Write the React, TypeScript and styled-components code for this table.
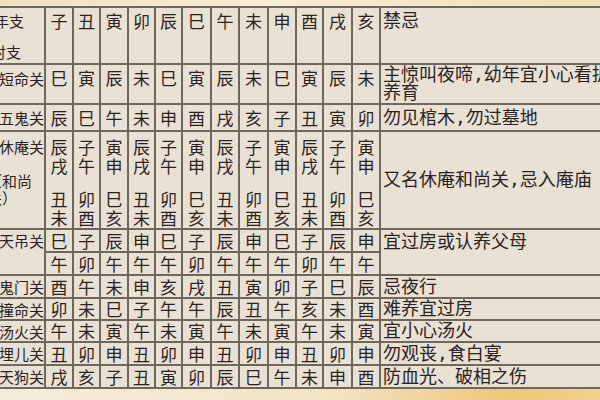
import type { FC } from 'react';
import styled, { createGlobalStyle } from 'styled-components';

const GlobalStyle = createGlobalStyle`
  html, body {
    margin: 0;
    padding: 0;
    background: #e9e1d3;
  }
`;

const BRANCHES = ['子', '丑', '寅', '卯', '辰', '巳', '午', '未', '申', '酉', '戌', '亥'];

// 休庵关: each cell holds two stacked pairs
const MONK_PAIRS = [
  ['辰戌', '丑未'],
  ['子午', '卯酉'],
  ['寅申', '巳亥'],
];

type Row = { name: string; cells: string; note: string };

const ROWS_AFTER: Row[] = [
  { name: '鬼门关', cells: '酉午未申亥戌丑寅卯子巳辰', note: '忌夜行' },
  { name: '撞命关', cells: '卯未巳子午午辰丑午亥未酉', note: '难养宜过房' },
  { name: '汤火关', cells: '午未寅午未寅午未寅午未寅', note: '宜小心汤火' },
  { name: '埋儿关', cells: '丑卯申丑卯申丑卯申丑卯申', note: '勿观丧,食白宴' },
  { name: '天狗关', cells: '戌亥子丑寅卯辰巳午未申酉', note: '防血光、破相之伤' },
];

const Page = styled.div`
  width: 600px;
  height: 400px;
  overflow: hidden;
  display: flex;
  flex-direction: column;
  background: #e9e1d3;
  color: #2a231f;
  font-family: "Noto Sans CJK SC", sans-serif;
`;

const TopBand = styled.div`
  height: 6px;
  flex-shrink: 0;
  background: linear-gradient(90deg, #efe2bf 0%, #f6edd3 45%, #f0e0b4 100%);
`;

const BottomBand = styled.div`
  flex: 1;
  background: linear-gradient(90deg, #f4ecdc 0%, #f3e4c4 55%, #efc678 85%, #f3d18e 100%);
`;

const Table = styled.div`
  display: grid;
  grid-template-columns: 56px 26px 25px 26px 25px 25px 27px 26px 27px 26px 25px 27px 26px 240px;
  grid-template-rows: 55px 38px 25px 96px 21px 21px 21px 20px 20px 21px 21px;
  gap: 2px;
  padding: 2px 0;
  margin-left: -12px;
  align-self: flex-start;
  flex-shrink: 0;
  background: #6e675c;
`;

const Cell = styled.div`
  background: #e9e1d3;
  display: flex;
  min-width: 0;
  white-space: nowrap;
`;

const HeadLabel = styled(Cell)`
  flex-direction: column;
  justify-content: space-between;
  padding: 3px 0 1px 3px;
  font-size: 15px;
  line-height: 20px;
`;

const HeadLine = styled.span<{ $shift?: number }>`
  margin-left: ${(p) => p.$shift ?? 0}px;
`;

const Label = styled(Cell)<{ $span?: number; $top?: boolean; $lift?: number }>`
  grid-row: span ${(p) => p.$span ?? 1};
  justify-content: flex-end;
  align-items: ${(p) => (p.$top ? 'flex-start' : 'center')};
  padding-bottom: ${(p) => p.$lift ?? 0}px;
  font-size: 15px;
  line-height: 21px;
`;

const MonkLabel = styled(Cell)`
  flex-direction: column;
  padding-top: 5px;
  font-size: 15px;
  line-height: 17px;
`;

const MonkLine = styled.div<{ $first?: boolean }>`
  align-self: ${(p) => (p.$first ? 'flex-end' : 'flex-start')};
  line-height: ${(p) => (p.$first ? '19px' : '17px')};
  margin-bottom: ${(p) => (p.$first ? '16px' : '0')};
  margin-left: ${(p) => (p.$first ? '0' : '-1px')};
`;

const Branch = styled(Cell)<{ $head?: boolean; $lift?: number }>`
  justify-content: center;
  align-items: ${(p) => (p.$head ? 'flex-start' : 'center')};
  padding-top: ${(p) => (p.$head ? '3px' : '0')};
  padding-bottom: ${(p) => p.$lift ?? 0}px;
  font-size: 17px;
  line-height: 20px;
`;

const Stack = styled(Cell)`
  flex-direction: column;
  justify-content: space-between;
  align-items: center;
  padding: 5px 0 1px;
  font-size: 17px;
  line-height: 19px;
`;

const Pair = styled.div`
  display: flex;
  flex-direction: column;
  align-items: center;
`;

const Note = styled(Cell)<{ $span?: number; $top?: boolean; $pad?: number }>`
  grid-row: span ${(p) => p.$span ?? 1};
  flex-direction: column;
  justify-content: ${(p) => (p.$top ? 'flex-start' : 'center')};
  padding: ${(p) => p.$pad ?? 0}px 0 0 2px;
  font-family: "DejaVu Sans Mono", "Noto Sans CJK SC", monospace;
  font-size: 18px;
  line-height: ${(p) => (p.$top ? '18px' : '20px')};
`;

const BranchRow: FC<{ cells: string; lift?: number }> = ({ cells, lift }) => (
  <>
    {Array.from(cells).map((c, i) => (
      <Branch key={i} $lift={lift}>
        {c}
      </Branch>
    ))}
  </>
);

const RowBlock: FC<{ row: Row }> = ({ row }) => (
  <>
    <Label>{row.name}</Label>
    <BranchRow cells={row.cells} />
    <Note>{row.note}</Note>
  </>
);

const App: FC = () => {
  return (
    <>
      <GlobalStyle />
      <Page>
        <TopBand />
        <Table>
          {/* header */}
          <HeadLabel>
            <HeadLine $shift={3}>年支</HeadLine>
            <HeadLine>时支</HeadLine>
          </HeadLabel>
          {BRANCHES.map((b) => (
            <Branch key={b} $head>
              {b}
            </Branch>
          ))}
          <Note $top $pad={4}>
            禁忌
          </Note>

          <Label $lift={12}>短命关</Label>
          <BranchRow cells="巳寅辰未巳寅辰未巳寅辰未" lift={12} />
          <Note $top $pad={1}>
            <span>主惊叫夜啼,幼年宜小心看护</span>
            <span>养育</span>
          </Note>

          <Label>五鬼关</Label>
          <BranchRow cells="辰巳午未申酉戌亥子丑寅卯" />
          <Note>勿见棺木,勿过墓地</Note>

          <MonkLabel>
            <MonkLine $first>休庵关</MonkLine>
            <MonkLine>（和尚</MonkLine>
            <MonkLine>关）</MonkLine>
          </MonkLabel>
          {BRANCHES.map((b, i) => (
            <Stack key={b}>
              {MONK_PAIRS[i % 3].map((pair) => (
                <Pair key={pair}>
                  {Array.from(pair).map((c) => (
                    <span key={c}>{c}</span>
                  ))}
                </Pair>
              ))}
            </Stack>
          ))}
          <Note>又名休庵和尚关,忌入庵庙</Note>

          <Label $span={2} $top>
            天吊关
          </Label>
          <BranchRow cells="巳子辰申巳子辰申巳子辰申" />
          <Note $span={2} $top $pad={3}>
            宜过房或认养父母
          </Note>
          <BranchRow cells="午卯午午午卯午午午卯午午" />

          {ROWS_AFTER.map((r) => (
            <RowBlock key={r.name} row={r} />
          ))}
        </Table>
        <BottomBand />
      </Page>
    </>
  );
};

export default App;
